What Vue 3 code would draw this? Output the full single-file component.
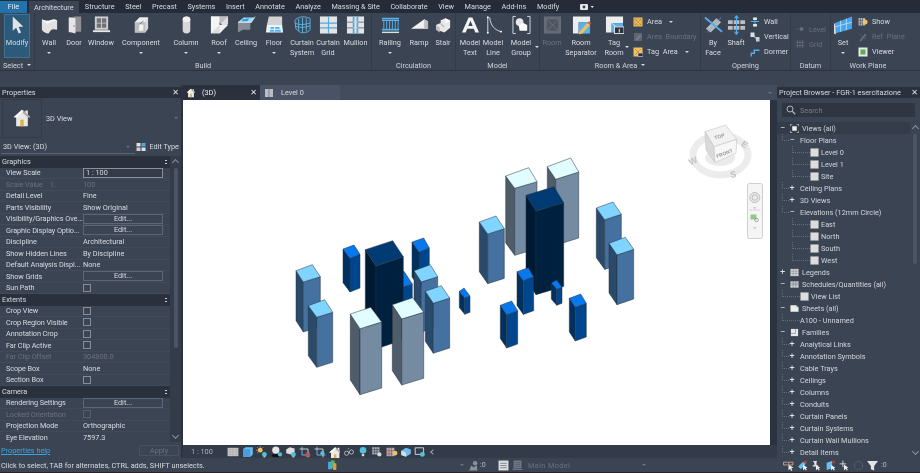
<template>
  <div class="app">
    <!-- top tab strip -->
    <div class="tabs">
      <span class="tab file">File</span>
      <span class="tab active">Architecture</span>
      <span v-for="t in tabs" :key="t" class="tab">{{ t }}</span>
      <svg class="cam" viewBox="0 0 14 8"><rect x="0" y="1" width="8" height="6" rx="1" fill="#e4e6ea"/><circle cx="4" cy="4" r="1.4" fill="#39404d"/><path d="M10.500 3h3.500l-1.750 2z" fill="#d8dbe0"/></svg>
    </div>

    <!-- ribbon -->
    <div class="ribbon">
      <div v-for="p in panels" :key="p.label" class="panel" :style="{ width: p.w + 'px' }">
        <div class="panel-tools">
          <template v-for="t in p.items" :key="t.label || t.rows[0].label">
            <div v-if="t.rows" class="stack" :class="{ pair: t.rows.length === 2 }" :style="{ width: t.w + 'px' }">
              <div v-for="r in t.rows" :key="r.label" class="stack-row" :class="{ off: r.off }">
                <svg class="ico-s" viewBox="0 0 20 20" v-html="icons[r.icon]"></svg>
                <span>{{ r.label }}</span>
                <i v-if="r.caret" class="caret"></i>
              </div>
            </div>
            <div v-else class="tool" :class="{ on: t.on, off: t.off }" :style="{ width: t.w + 'px' }">
              <svg class="ico" viewBox="0 0 20 20" v-html="icons[t.icon]"></svg>
              <span v-for="l in t.label.split('|')" :key="l" class="tool-line">{{ l }}</span>
              <i v-if="t.caret" class="caret under"></i>
              <i v-if="t.side" class="caret side"></i>
            </div>
          </template>
        </div>
        <div class="panel-label">{{ p.label }}<i v-if="p.caret" class="caret"></i></div>
      </div>
    </div>
    <div class="optbar"></div>

    <div class="main">
      <!-- properties palette -->
      <aside class="props">
        <div class="dock-head"><span>Properties</span><b class="x">✕</b></div>
        <div class="type-sel">
          <div class="type-thumb">
            <svg viewBox="0 0 24 24" v-html="icons.house"></svg>
          </div>
          <span class="type-name">3D View</span>
          <i class="caret dim"></i>
        </div>
        <div class="inst-row">
          <span>3D View: (3D)</span>
          <i class="caret dim"></i>
          <span class="edit-type"><svg class="ico-s" viewBox="0 0 20 20" v-html="icons.editType"></svg>Edit Type</span>
        </div>
        <div class="grid-wrap">
          <div class="grid">
            <template v-for="g in propGroups" :key="g.name">
              <div class="group"><span>{{ g.name }}</span><em></em></div>
              <div v-for="r in g.rows" :key="r[0]" class="prop" :class="{ off: r[2] === 'dim' || r[2] === 'dimcheck' }">
                <span class="prop-k">{{ r[0] }}</span>
                <span class="prop-v">
                  <span v-if="r[2] === 'edit'" class="btn">Edit...</span>
                  <span v-else-if="r[2] === 'input'" class="inp">{{ r[1] }}</span>
                  <span v-else-if="r[2] === 'check' || r[2] === 'dimcheck'" class="chk"></span>
                  <template v-else>{{ r[1] }}</template>
                </span>
              </div>
            </template>
          </div>
          <div class="vscroll">
            <i class="chev up"></i>
            <div class="thumb"></div>
            <i class="chev down"></i>
          </div>
        </div>
        <div class="props-foot">
          <a>Properties help</a>
          <span class="apply">Apply</span>
        </div>
      </aside>

      <!-- centre: view tabs + canvas -->
      <section class="centre">
        <div class="view-tabs">
          <div class="vtab cur">
            <svg class="ico-s" viewBox="0 0 24 24" v-html="icons.house"></svg>
            <span>(3D)</span><b class="x">✕</b>
          </div>
          <div class="vtab lvl">
            <svg class="ico-s" viewBox="0 0 20 20" v-html="icons.planTab"></svg>
            <span>Level 0</span>
          </div>
          <i class="caret dim end"></i>
        </div>
        <div class="canvas-row">
          <div class="canvas">
            <svg class="scene" viewBox="183 100 587 345">
              <g v-for="(b, i) in boxes" :key="i" stroke="#26323e" stroke-width="0.5" stroke-linejoin="round">
                <polygon :points="b.left" :fill="b.c[1]" />
                <polygon :points="b.right" :fill="b.c[2]" />
                <polygon :points="b.top" :fill="b.c[0]" />
              </g>
              <!-- view cube -->
              <g>
                <ellipse cx="720.500" cy="155" rx="27" ry="19.500" fill="none" stroke="#ececec" stroke-width="6" />
                <ellipse cx="720.500" cy="155" rx="30.500" ry="23" fill="none" stroke="#dcdcdc" stroke-width="0.6" />
                <ellipse cx="720" cy="158" rx="15" ry="8" fill="#dedede" opacity="0.6" />
                <polygon points="705,131.700 725.700,125 736.700,139.300 714,146.700" fill="#f2f2f2" stroke="#c4c4c4" stroke-width="0.6" />
                <polygon points="705,131.700 714,146.700 715,162.700 706,150" fill="#dadada" stroke="#c4c4c4" stroke-width="0.6" />
                <polygon points="714,146.700 736.700,139.300 736,153 715,162.700" fill="#f7f7f7" stroke="#c4c4c4" stroke-width="0.6" />
                <text class="cube-t" x="720" y="138" transform="rotate(-17 720 138)">TOP</text>
                <text class="cube-t" x="725" y="155" transform="rotate(-20 725 155)">FRONT</text>
                <text class="comp" x="693" y="164" transform="rotate(-25 693 161)">W</text>
                <text class="comp" x="733" y="177.500" transform="rotate(-10 733 174)">S</text>
                <text class="comp" x="745" y="147.500" transform="rotate(35 745 144)">E</text>
              </g>
              <!-- navigation bar -->
              <g>
                <rect x="747.500" y="183.500" width="15" height="55" rx="2" fill="#f5f5f5" stroke="#cfcfcf" />
                <circle cx="754.800" cy="197.500" r="5" fill="#ececec" stroke="#bdbdbd" />
                <rect x="752.300" y="195" width="5" height="5" rx="1" fill="none" stroke="#aaa" stroke-width="0.7" />
                <path d="M753.300 207.500h3l-1.500 1.200z" fill="#999" />
                <path d="M749 210h11.500" stroke="#d4d4d4" />
                <rect x="750.500" y="214.500" width="6" height="5" fill="#8fc98a" />
                <circle cx="756.500" cy="220" r="1.800" fill="none" stroke="#888" stroke-width="0.7" />
                <path d="M753.300 227.500h3l-1.500 1.200z" fill="#999" />
              </g>
            </svg>
          </div>
          <div class="canvas-side"></div>
        </div>
        <div class="viewbar">
          <span class="scale">1 : 100</span>
          <svg v-for="(v, i) in viewIcons" :key="i" class="ico-v" viewBox="0 0 20 20" v-html="icons[v]"></svg>
          <i class="chev-left"></i>
        </div>
      </section>

      <!-- project browser -->
      <aside class="browser">
        <div class="dock-head"><span>Project Browser - FGR-1 esercitazione</span><b class="x">✕</b></div>
        <div class="search">
          <svg class="ico-s" viewBox="0 0 20 20"><circle cx="8" cy="8" r="6" fill="none" stroke="#aeb4bd" stroke-width="2"/><path d="M12.500 12.500l6 6" stroke="#aeb4bd" stroke-width="2.400"/></svg>
          <span>Search</span>
        </div>
        <div class="tree-wrap">
          <div class="tree">
            <div v-for="n in tree" :key="n.t" class="node" :class="['l' + n.l, { sel: n.sel }]">
              <span v-if="n.s" class="sign">{{ n.s }}</span>
              <svg v-if="n.i" class="ico-t" viewBox="0 0 20 20" v-html="icons[n.i]"></svg>
              <span class="node-t">{{ n.t }}</span>
            </div>
          </div>
          <div class="vscroll wide">
            <i class="chev up"></i>
            <div class="thumb"></div>
            <i class="chev down"></i>
          </div>
        </div>
      </aside>
    </div>

    <!-- status bar -->
    <div class="status">
      <span class="st-text">Click to select, TAB for alternates, CTRL adds, SHIFT unselects.</span>
      <svg class="ico-st" viewBox="0 0 20 20" v-html="icons.worksets"></svg>
      <i class="caret dim st-c1"></i>
      <svg class="ico-st st-person" viewBox="0 0 20 20" v-html="icons.person"></svg>
      <span class="st-zero">:0</span>
      <svg class="ico-st st-list" viewBox="0 0 20 20" v-html="icons.listOn"></svg>
      <svg class="ico-st st-list2" viewBox="0 0 20 20" v-html="icons.listOff"></svg>
      <span class="st-model">Main Model</span>
      <i class="caret dim"></i>
      <div class="st-right">
        <svg v-for="(s, i) in statusIcons" :key="i" class="ico-st" viewBox="0 0 20 20" v-html="icons[s]"></svg>
        <span class="st-zero last">:0</span>
      </div>
    </div>
  </div>
</template>

<script setup>
const tabs = ['Structure', 'Steel', 'Precast', 'Systems', 'Insert', 'Annotate', 'Analyze', 'Massing & Site', 'Collaborate', 'View', 'Manage', 'Add-Ins', 'Modify']

const panels = [
  { label: 'Select', caret: true, w: 35, items: [{ label: 'Modify', icon: 'modify', w: 26, on: true }] },
  {
    label: 'Build', w: 337, items: [
      { label: 'Wall', icon: 'wall', w: 28, caret: true },
      { label: 'Door', icon: 'door', w: 22 },
      { label: 'Window', icon: 'window', w: 32 },
      { label: 'Component', icon: 'component', w: 48, caret: true },
      { label: 'Column', icon: 'column', w: 42, caret: true },
      { label: 'Roof', icon: 'roof', w: 24, caret: true },
      { label: 'Ceiling', icon: 'ceiling', w: 30 },
      { label: 'Floor', icon: 'floor', w: 26, caret: true },
      { label: 'Curtain|System', icon: 'curtainSys', w: 30 },
      { label: 'Curtain|Grid', icon: 'curtainGrid', w: 22 },
      { label: 'Mullion', icon: 'mullion', w: 33 }
    ]
  },
  {
    label: 'Circulation', w: 84, items: [
      { label: 'Railing', icon: 'railing', w: 36, caret: true },
      { label: 'Ramp', icon: 'ramp', w: 22 },
      { label: 'Stair', icon: 'stair', w: 26 }
    ]
  },
  {
    label: 'Model', w: 84, items: [
      { label: 'Model|Text', icon: 'modelText', w: 28 },
      { label: 'Model|Line', icon: 'modelLine', w: 18 },
      { label: 'Model|Group', icon: 'modelGroup', w: 38, side: true }
    ]
  },
  {
    label: 'Room & Area', caret: true, w: 161, items: [
      { label: 'Room', icon: 'room', w: 24, off: true },
      { label: 'Room|Separator', icon: 'roomSep', w: 34 },
      { label: 'Tag|Room', icon: 'tagRoom', w: 32, side: true },
      { w: 71, rows: [
        { label: 'Area', icon: 'area', caret: true },
        { label: 'Area  Boundary', icon: 'areaB', off: true },
        { label: 'Tag  Area', icon: 'tagArea', caret: true }
      ] }
    ]
  },
  {
    label: 'Opening', w: 90, items: [
      { label: 'By|Face', icon: 'byFace', w: 24 },
      { label: 'Shaft', icon: 'shaft', w: 22 },
      { w: 44, rows: [
        { label: 'Wall', icon: 'opWall' },
        { label: 'Vertical', icon: 'opVert' },
        { label: 'Dormer', icon: 'dormer' }
      ] }
    ]
  },
  {
    label: 'Datum', w: 40, items: [
      { w: 40, rows: [
        { label: 'Level', icon: 'level', off: true },
        { label: 'Grid', icon: 'gridI', off: true }
      ] }
    ]
  },
  {
    label: 'Work Plane', w: 74, items: [
      { label: 'Set', icon: 'setWp', w: 24, caret: true },
      { w: 50, rows: [
        { label: 'Show', icon: 'show' },
        { label: 'Ref  Plane', icon: 'refPlane', off: true },
        { label: 'Viewer', icon: 'viewer' }
      ] }
    ]
  }
]

const propGroups = [
  {
    name: 'Graphics',
    rows: [
      ['View Scale', '1 : 100', 'input'],
      ['Scale Value    1:', '100', 'dim'],
      ['Detail Level', 'Fine'],
      ['Parts Visibility', 'Show Original'],
      ['Visibility/Graphics Ove...', '', 'edit'],
      ['Graphic Display Optio...', '', 'edit'],
      ['Discipline', 'Architectural'],
      ['Show Hidden Lines', 'By Discipline'],
      ['Default Analysis Displ...', 'None'],
      ['Show Grids', '', 'edit'],
      ['Sun Path', '', 'check']
    ]
  },
  {
    name: 'Extents',
    rows: [
      ['Crop View', '', 'check'],
      ['Crop Region Visible', '', 'check'],
      ['Annotation Crop', '', 'check'],
      ['Far Clip Active', '', 'check'],
      ['Far Clip Offset', '304800.0', 'dim'],
      ['Scope Box', 'None'],
      ['Section Box', '', 'check']
    ]
  },
  {
    name: 'Camera',
    rows: [
      ['Rendering Settings', '', 'edit'],
      ['Locked Orientation', '', 'dimcheck'],
      ['Projection Mode', 'Orthographic'],
      ['Eye Elevation', '7597.3']
    ]
  }
]

const tree = [
  { t: 'Views (all)', l: 0, s: '−', i: 'views', sel: true },
  { t: 'Floor Plans', l: 1, s: '−' },
  { t: 'Level 0', l: 2, i: 'sheetView' },
  { t: 'Level 1', l: 2, i: 'sheetView' },
  { t: 'Site', l: 2, i: 'sheetView' },
  { t: 'Ceiling Plans', l: 1, s: '+' },
  { t: '3D Views', l: 1, s: '+' },
  { t: 'Elevations (12mm Circle)', l: 1, s: '−' },
  { t: 'East', l: 2, i: 'sheetView' },
  { t: 'North', l: 2, i: 'sheetView' },
  { t: 'South', l: 2, i: 'sheetView' },
  { t: 'West', l: 2, i: 'sheetView' },
  { t: 'Legends', l: 0, s: '+', i: 'legend' },
  { t: 'Schedules/Quantities (all)', l: 0, s: '−', i: 'schedule' },
  { t: 'View List', l: 3, i: 'sheetView' },
  { t: 'Sheets (all)', l: 0, s: '−', i: 'sheet' },
  { t: 'A100 - Unnamed', l: 4 },
  { t: 'Families', l: 0, s: '−', i: 'families' },
  ...['Analytical Links', 'Annotation Symbols', 'Cable Trays', 'Ceilings', 'Columns', 'Conduits', 'Curtain Panels', 'Curtain Systems', 'Curtain Wall Mullions', 'Detail Items']
    .map((t) => ({ t, l: 1, s: '+' }))
]

// top, left side, right side
const palette = {
  pale: ['#e2fdff', '#4e5d69', '#758ba1'],
  sky: ['#7fd5ff', '#2a4a6c', '#44719f'],
  blue: ['#0878ee', '#00305f', '#00468d'],
  navy: ['#003b74', '#001a33', '#002040']
}

// kind, top face corners (left, back, right, front) in page pixels, height
const blocks = [
  ['pale', 505.7, 176, 528.7, 167.7, 537, 181.7, 514.7, 188.3, 67],
  ['pale', 547.3, 166.7, 570.7, 158, 578.7, 172, 555.7, 179.3, 66],
  ['navy', 526, 195.3, 554, 186.7, 563.7, 202.7, 536, 211, 83.7],
  ['sky', 479.3, 222, 496, 216, 504.3, 228.7, 487.7, 234, 49.7],
  ['sky', 596.3, 208, 613, 202, 621.3, 214.3, 604.7, 219.7, 49.7],
  ['sky', 609, 243.3, 625.3, 237.3, 633.7, 249.3, 617, 255, 49.7],
  ['blue', 551.3, 283, 556.7, 280, 562, 287.3, 556.7, 289.3, 16],
  ['blue', 517, 271.7, 528.3, 267.7, 533.7, 277, 523.3, 280.7, 33.7],
  ['blue', 500.3, 305.3, 511.7, 301, 517.7, 310.7, 506.7, 314.7, 33.3],
  ['blue', 569.3, 298.3, 580.7, 294, 586.3, 303.3, 575.3, 307.3, 33.7],
  ['blue', 343, 249, 354, 245, 360, 254.3, 350, 258.3, 33.7],
  ['blue', 385, 277, 404, 271.3, 412.3, 284, 394, 290, 33],
  ['navy', 365.3, 249.7, 392.7, 240.7, 403.3, 256.7, 376, 266, 83],
  ['blue', 412, 242, 423.7, 238, 429.3, 248, 419, 252, 35],
  ['sky', 414, 270.7, 430.3, 264.7, 437.7, 276.7, 421.3, 282, 50],
  ['sky', 296, 270.7, 312.3, 264.7, 320.3, 276.7, 303.3, 282, 50],
  ['sky', 308.3, 305.7, 324.7, 299.7, 332.7, 312.3, 316.7, 317.3, 50],
  ['sky', 425.3, 291.3, 441.3, 285.7, 449.7, 298, 433.3, 303.3, 50],
  ['pale', 350.3, 314, 370.7, 307.3, 381.7, 322, 360, 328.7, 66],
  ['pale', 392.3, 304.7, 412.7, 297.7, 423.7, 312.3, 401.7, 319, 66],
  ['blue', 459.3, 291.3, 464, 288, 470, 296, 464.7, 298, 16.3]
]

const boxes = blocks.map(([k, lx, ly, bx, by, rx, ry, fx, fy, h]) => ({
  c: palette[k],
  top: `${lx},${ly} ${bx},${by} ${rx},${ry} ${fx},${fy}`,
  left: `${lx},${ly} ${fx},${fy} ${fx},${fy + h} ${lx},${ly + h}`,
  right: `${fx},${fy} ${rx},${ry} ${rx},${ry + h} ${fx},${fy + h}`
}))

const viewIcons = ['vDetail', 'vStyle', 'vSun', 'vShadow', 'vRender', 'vCrop', 'vCrop2', 'house', 'vGlasses', 'vBulb', 'vHide', 'vTemp', 'vReveal', 'vBox']
const statusIcons = ['sLink', 'sUnderlay', 'sPin', 'sFace', 'sDrag', 'sRing', 'sFilter']

const cy = '#4fc3d9'
const icons = {
  modify: '<path d="M5 1v15l3.600-3 2.600 6 2.600-1.200-2.600-5.800 4.800-.5z" fill="#dfe4ea"/>',
  wall: '<path d="M2 4c4 2 7 2 9 1s5-1 7 0v10c-3-1-5-1-7 1l-2 3c-3 0-6-2-7-4z" fill="#e2e2e2"/><path d="M2 4c4 2 7 2 9 1s5-1 7 0c-2 1-5 1-7 2s-4 2-5 1-3-2-4-4z" fill="#f6f6f6"/>',
  door: '<path d="M4 2l7-1h6v16h-6l-7 1z" fill="#8e9094"/><path d="M4 2l7 1v16l-7-2z" fill="#e6e6e6"/><circle cx="9.500" cy="11" r=".7" fill="#666"/>',
  window: '<rect x="3" y="1" width="14" height="14" fill="#cfcfcf"/><path d="M5 3h4.500v4.500H5zM10.500 3H15v4.500h-4.500zM5 8.500h4.500V13H5zM10.500 8.500H15V13h-4.500z" fill="#6e7176"/><rect x="1" y="15.500" width="18" height="2" fill="#e8e8e8"/>',
  component: '<path d="M3 7l5-5h9v12l-3 4H3z" fill="#d6d6d6"/><path d="M3 7h11v11H3z" fill="#bdbdbd"/><path d="M8 2h9l-3 5H3z" fill="#ededed"/><path d="M8 9l4 1v6H7z" fill="#f2f2f2"/><path d="M8 9l4-3" stroke="#777" fill="none"/>',
  column: '<rect x="6" y="1" width="8" height="18" rx="4" fill="#d8d8d8"/><ellipse cx="10" cy="4" rx="4" ry="3" fill="#f0f0f0"/>',
  roof: '<path d="M1 1h18v8l-9 10H1z" fill="#dedede"/><path d="M1 1h9v9l-9 9z" fill="#f5f5f5"/><path d="M10 1h9l-9 9z" fill="#bdbdbd"/><path d="M10 10h9l-9 9z" fill="#f0f0f0"/><path d="M10 7l3 3h-3z" fill="#6b6f76"/>',
  ceiling: '<path d="M1 7l6-5h12l-4 6H2z" fill="#9fdcf5"/><path d="M6 4l7-1-2 3H5z" fill="#2f9be0"/><path d="M1 7v11l5-3h8V8z" fill="#c9c9c9" opacity=".55"/><path d="M1 7h14l4-6" fill="none" stroke="#ddd" stroke-width=".8"/>',
  floor: '<path d="M4 1h14v9H2z" fill="#d2d2d2"/><path d="M2 10h16l1 8H1z" fill="#eaf6fb"/><path d="M6 12h9l2 5H5z" fill="#4fb2ee"/><path d="M10 12v5M5 14.500h11" stroke="#eaf6fb"/>',
  curtainSys: '<path d="M2 5c5-5 11-4 16-2v12c-3 4-7 3-10 3L3 14z" fill="#3a4e62"/><g fill="none" stroke="#6ec3f0" stroke-width=".8"><path d="M2 5c5-5 11-4 16-2v12c-3 4-7 3-10 3L3 14zM2 8c4 2 9 2 16 0M2.400 11c4 2 9 2 15.600 0M6 3.500v13M10 2.500V18M14 3v14"/></g>',
  curtainGrid: '<rect x="1" y="1" width="18" height="18" fill="#e4e4e4"/><path d="M1 8h18M1 13h18M10 1v18" stroke="#4fa8e0" stroke-width="1.200"/>',
  mullion: '<rect x="1" y="1" width="18" height="18" fill="#e4e4e4"/><path d="M1 7h18M1 13h18" stroke="#6c7480" stroke-width="1"/><path d="M8 1v18M12 1v18" stroke="#4fa8e0" stroke-width="1.800"/><path d="M8 7h4M8 13h4" stroke="#fff"/>',
  railing: '<g stroke="#57b4ee" fill="none"><path d="M1 3h18M1 5h18" stroke-width="1.400"/><path d="M3 5v9M6 5v9M9 5v9M12 5v9M15 5v9M18 5v9" stroke-width="1"/></g><rect x="1" y="14" width="18" height="1.800" fill="#57b4ee"/><rect x="1" y="17" width="18" height="1.500" fill="#dfdfdf"/>',
  ramp: '<path d="M1 14l14-10 4 2v8z" fill="#f0f0f0"/><path d="M15 4l4 2v8h-4z" fill="#bbb"/>',
  stair: '<path d="M2 10l5-2V5l5-2 5 2v8l-6 5-8-3z" fill="#e8e8e8"/><path d="M2 10l4 3v5l-4-3zM7 8l4 3v2l-4-3z" fill="#bcbcbc"/><path d="M12 3l5 3-5 2z" fill="#fff"/>',
  modelText: '<path d="M1 18L8 2h4l7 16h-4l-1.500-4h-7L5 18zm6.700-7h4.600L10 5.500z" fill="#f4f4f4"/>',
  modelLine: '<path d="M4 1v18M6 2c1 9 5 13 12 15" fill="none" stroke="#d8dce2" stroke-width="1"/><circle cx="4" cy="2" r="1" fill="#fff"/><circle cx="4" cy="18" r="1" fill="#fff"/><circle cx="18" cy="17" r="1" fill="#fff"/>',
  modelGroup: '<path d="M4 1H1v18h3M16 1h3v18h-3" fill="none" stroke="#d8dce2"/><circle cx="8" cy="7" r="4" fill="#e8e8e8"/><path d="M7 10l5-2 4 2v6H8z" fill="#f8f8f8"/>',
  room: '<rect x="1" y="1" width="18" height="18" fill="#666c77"/><rect x="4" y="4" width="12" height="12" fill="#50565f"/><path d="M4 4l12 12M16 4L4 16" stroke="#727882" stroke-width=".8"/>',
  roomSep: '<path d="M1 1h18v6H7v12H1z" fill="#ededed"/><rect x="7" y="7" width="12" height="12" fill="#58b2ea"/><path d="M8 17l8-9 3 2-8 9-4 1z" fill="#f1c063"/><path d="M16 8l3 2 1-2-2-2z" fill="#e25b4d"/>',
  tagRoom: '<path d="M1 1h18v7H7v10H1z" fill="#ededed"/><rect x="7" y="8" width="12" height="10" fill="#58b2ea"/><path d="M7 8l12 10" stroke="#cdeafb"/><rect x="10" y="12" width="10" height="7" fill="#2d333e" stroke="#e2e2e2"/><path d="M15 14v4" stroke="#eee"/>',
  area: '<rect x="1" y="1" width="18" height="18" fill="#f1c063"/><rect x="4" y="4" width="12" height="12" fill="none" stroke="#9a6d1e" stroke-width=".8"/><path d="M4 4l12 12M16 4L4 16" stroke="#9a6d1e" stroke-width="1"/>',
  areaB: '<rect x="2" y="2" width="16" height="16" fill="#5f6570"/><path d="M5 15l9-10 3 3-9 9z" fill="#787e88"/>',
  tagArea: '<rect x="1" y="1" width="18" height="18" fill="#f1c063"/><path d="M4 4l12 12M16 4L4 16" stroke="#9a6d1e"/><rect x="10" y="12" width="10" height="7" fill="#2d333e" stroke="#e2e2e2"/>',
  byFace: '<path d="M2 14L13 3l5 4L7 18z" fill="#b9b9b9"/><path d="M1 2l18 15" stroke="#54acec" stroke-width="2"/><path d="M3 18L18 2" stroke="#54acec" stroke-width="1.400" opacity=".4"/>',
  shaft: '<g fill="#bdbdbd"><rect x="1" y="5" width="5" height="4"/><rect x="7" y="5" width="6" height="4"/><rect x="14" y="5" width="5" height="4"/><rect x="1" y="11" width="5" height="4"/><rect x="7" y="11" width="6" height="4"/><rect x="14" y="11" width="5" height="4"/></g><path d="M10 0v20M10 0L8 3M10 0l2 3M10 20l-2-3M10 20l2-3" stroke="#54acec" fill="none" stroke-width="1.200"/>',
  opWall: '<path d="M10 1v18M2 9h16" stroke="#54acec" stroke-width="2"/><rect x="6" y="1" width="8" height="5" fill="#dfdfdf"/><rect x="6" y="14" width="8" height="5" fill="#dfdfdf"/>',
  opVert: '<path d="M3 3l13 14" stroke="#54acec" stroke-width="3"/><rect x="1" y="1" width="8" height="9" fill="#dfdfdf"/><rect x="12" y="10" width="7" height="9" fill="#cfcfcf"/>',
  dormer: '<path d="M1 19V11h6V5h12v3H10v6H4v5z" fill="#54acec"/>',
  level: '<path d="M2 10h7" stroke="#666c77" stroke-dasharray="2 1" stroke-width="1.400"/><circle cx="13" cy="10" r="4" fill="#666c77"/>',
  gridI: '<path d="M5 2v16M10 2v16M15 2v16M1 7h18M1 13h18" stroke="#666c77" stroke-width="1.500"/>',
  setWp: '<path d="M1 8l18-7v13L1 19z" fill="#46a4ee"/><path d="M7 5.500V17M13 3.500V15.500M1 12l18-5" stroke="#bce2fb" stroke-width=".9"/><path d="M1 8l-1 1v10l2 1z" fill="#ddd"/>',
  show: '<rect x="1" y="2" width="13" height="15" fill="#aeb3ba"/><path d="M5 2v15M9 2v15M1 7h13M1 12h13" stroke="#3b4453"/><circle cx="14" cy="10" r="5" fill="#f1c063"/>',
  refPlane: '<path d="M3 17L14 3l3 3L6 19z" fill="#666c77"/><path d="M3 4l14 12" stroke="#666c77"/>',
  viewer: '<rect x="1" y="1" width="18" height="18" fill="#e9e9e9"/><rect x="5" y="5" width="10" height="10" fill="#55b04f"/>',
  house: '<path d="M12 2L2 11h3v11h14V11h3L19 8V3h-3v2.300z" fill="#e9e9e9"/><path d="M12 2L2 11h4l7-7z" fill="#fff"/><path d="M13 2l9 9h-3L13 6z" fill="#a9a9a9"/><rect x="10" y="14" width="4" height="8" fill="#d9b23f"/>',
  editType: '<rect x="1" y="2" width="8" height="7" fill="#e2e2e2"/><rect x="11" y="2" width="8" height="7" fill="#4fa8e0"/><rect x="1" y="11" width="8" height="7" fill="#cfcfcf"/><rect x="11" y="11" width="8" height="7" fill="#e2e2e2"/>',
  planTab: '<rect x="2" y="2" width="16" height="16" fill="#b9bec6"/><path d="M10 2v16" stroke="#4a5366"/>',
  views: '<rect x="5" y="5" width="10" height="10" fill="#f0f0f0"/><path d="M1 5V1h4M15 1h4v4M19 15v4h-4M5 19H1v-4" fill="none" stroke="#dfe2e6" stroke-width="1.400"/>',
  sheetView: '<rect x="1" y="1" width="18" height="18" fill="#dcdcdc"/><rect x="1" y="1" width="18" height="18" fill="none" stroke="#8d939c" stroke-dasharray="1.500 1.500"/>',
  legend: '<rect x="1" y="2" width="18" height="16" fill="#d4d4d4"/><path d="M7 2v16M13 2v16M1 7h18M1 12h18" stroke="#6b6f76" stroke-width=".8"/>',
  schedule: '<rect x="1" y="3" width="18" height="14" fill="#d8d8d8"/><path d="M1 7h18M1 11h18M7 3v14M13 3v14" stroke="#555b66" stroke-width="1"/>',
  sheet: '<path d="M1 3h13l5 5v9H1z" fill="#efefef"/><path d="M14 3l5 5h-5z" fill="#a6a6a6"/>',
  families: '<rect x="2" y="2" width="16" height="16" fill="#e8e8e8"/><path d="M2 12h10V2" fill="none" stroke="#555b66"/>',
  worksets: '<rect x="2" y="3" width="7" height="14" rx="1" fill="#4fa8e0"/><rect x="7" y="1" width="7" height="14" rx="1" fill="#53b36b"/><rect x="11" y="6" width="6" height="12" rx="1" fill="#d99a4a"/>',
  person: '<circle cx="13" cy="6" r="4" fill="#8b919b"/><path d="M2 19l4-9 4 3 6-3 1 9z" fill="#8b919b"/>',
  listOn: '<rect x="1" y="1" width="18" height="18" fill="#dcdfe3"/><path d="M4 6h12M4 10h12M4 14h12" stroke="#5d6676" stroke-width="1.300"/>',
  listOff: '<rect x="3" y="1" width="14" height="14" fill="#757c88"/><path d="M5 5h10M5 8.500h10M5 12h10" stroke="#3b4453"/><path d="M1 17h18" stroke="#757c88" stroke-width="2"/>',
  vDetail: '<rect x="1" y="3" width="18" height="14" fill="#c8c8c8"/><path d="M1 6h18M1 10h18M1 14h18M5 3v14M10 3v14M15 3v14" stroke="#8b8b8b" stroke-dasharray="1 1"/>',
  vStyle: '<path d="M2 5l4-3h12v12l-4 4H2z" fill="#6fbdf0"/><path d="M2 5h12v13H2z" fill="#4b9ede"/>',
  vSun: `<circle cx="7" cy="7" r="4" fill="#f1c063"/><path d="M7 0v3M0 7h3M2 2l2 2M12 2l-2 2M2 12l2-2" stroke="#f1c063"/><circle cx="14" cy="14" r="4" fill="${cy}"/><rect x="12.500" y="17" width="3" height="2" fill="#ccc"/>`,
  vShadow: `<circle cx="8" cy="7" r="6" fill="#e4e4e4"/><ellipse cx="8" cy="16" rx="7" ry="2.500" fill="#111"/><circle cx="15" cy="14" r="3.500" fill="${cy}"/>`,
  vRender: `<path d="M2 6l6-4 8 2v6l-6 4-8-2z" fill="#dcdcdc"/><circle cx="14" cy="14" r="4" fill="${cy}"/><rect x="12.500" y="17" width="3" height="2" fill="#ccc"/>`,
  vCrop: '<path d="M5 1v14h14" fill="none" stroke="#6fbdf0" stroke-width="1.500"/><path d="M1 5h14v14" fill="none" stroke="#dcdcdc" stroke-width="1.500"/><path d="M11 11l7 7M18 11l-7 7" stroke="#e0453a" stroke-width="2"/>',
  vCrop2: `<path d="M5 1v14h14" fill="none" stroke="#6fbdf0" stroke-width="1.500"/><path d="M1 5h14v14" fill="none" stroke="#dcdcdc" stroke-width="1.500"/><circle cx="14" cy="12" r="3.500" fill="${cy}"/>`,
  vGlasses: '<circle cx="6" cy="12" r="3.500" fill="none" stroke="#b9bec6" stroke-width="1.500"/><circle cx="14" cy="10" r="3.500" fill="none" stroke="#b9bec6" stroke-width="1.500"/><path d="M9 11l2-1M8 6l2-3" stroke="#b9bec6"/>',
  vBulb: `<circle cx="10" cy="7" r="5.500" fill="${cy}"/><rect x="8" y="13" width="4" height="4" fill="#d8d8d8"/>`,
  vHide: `<rect x="2" y="2" width="12" height="12" fill="#aeb3ba"/><path d="M6 2v12M10 2v12M2 6h12M2 10h12" stroke="#333b48"/><circle cx="14" cy="14" r="3.500" fill="#d8d8d8"/>`,
  vTemp: `<rect x="1" y="3" width="13" height="14" fill="#aeb3ba"/><path d="M5 3v14M9 3v14M1 8h13M1 13h13" stroke="#b73a30"/><circle cx="15" cy="12" r="4" fill="#f1c063"/>`,
  vReveal: '<path d="M2 8l8-5 8 3v7l-8 5-8-3z" fill="#6fbdf0"/><path d="M2 8l8 3v7l-8-3z" fill="#dcdcdc"/>',
  vBox: `<path d="M2 3h14v11H2z" fill="none" stroke="#dcdcdc" stroke-width="1.500"/><circle cx="14" cy="14" r="4" fill="${cy}"/>`,
  sLink: '<path d="M1 4h7a2 2 0 010 5H1zM10 4h8v5h-7" fill="none" stroke="#f1c0a0" stroke-width="1.300"/><path d="M10 8v11l3-3 2 4 2-1-2-4 4-1z" fill="#eee"/>',
  sUnderlay: '<path d="M2 12L11 3l5 4-9 10z" fill="#6fbdf0"/><path d="M11 8v11l3-3 2 3 2-1-2-3 3-1z" fill="#eee"/><path d="M13 1l5 5M18 1l-5 5" stroke="#e0453a" stroke-width="1.800"/>',
  sPin: '<path d="M3 2h8l-1 3v4l3 1v2H3v-2l3-1V5z" fill="#dfdfdf"/><path d="M9 9v10l3-3 2 3 2-1-2-3 3-1z" fill="#eee"/>',
  sFace: '<path d="M3 5l10-3v13L3 18z" fill="#6fbdf0"/><path d="M11 9v10l3-3 2 3 2-1-2-3 3-1z" fill="#eee"/><path d="M13 1l5 5M18 1l-5 5" stroke="#e0453a" stroke-width="1.800"/>',
  sDrag: '<path d="M7 1v12M1 7h12" stroke="#e4e4e4" stroke-width="1.500"/><path d="M9 8v11l3-3 2 3 2-1-2-3 3-1z" fill="#eee"/>',
  sRing: '<circle cx="10" cy="10" r="7.500" fill="none" stroke="#767c87" stroke-width="1.200" stroke-dasharray="2.500 1.500"/>',
  sFilter: '<path d="M0 2h20l-7 9v8l-6-2v-6z" fill="#e2e4e8"/>'
}
</script>

<style>
html, body { margin: 0; background: #3b4453; }
</style>

<style scoped>
.app {
  width: 920px;
  height: 473px;
  overflow: hidden;
  display: flex;
  flex-direction: column;
  background: #3b4453;
  color: #d7dbe1;
  font-family: Roboto, "Liberation Sans", sans-serif;
  font-size: 7.300px;
  filter: blur(0.35px);
}
svg { display: block; flex: none; }

.tabs {
  height: 13px;
  flex: none;
  display: flex;
  align-items: stretch;
  background: #252c38;
  padding-left: 0;
}
.tab {
  padding: 0 5.300px;
  line-height: 14px;
  white-space: nowrap;
}
.tab.file {
  width: 27px;
  box-sizing: border-box;
  text-align: center;
  padding: 0;
  margin: 1px 2px 0 0;
  background: #2273aa;
  color: #e8eef3;
  line-height: 12px;
}
.tab.active {
  background: #3b4453;
  margin-top: 1px;
  line-height: 13px;
  padding: 0 5px;
  margin-right: 1px;
}
.cam { width: 14px; height: 8px; align-self: center; margin-left: 15px; }

.ribbon {
  height: 57px;
  flex: none;
  display: flex;
  border-bottom: 1px solid #2c3340;
  box-sizing: content-box;
}
.panel {
  flex: none;
  display: flex;
  flex-direction: column;
  box-sizing: border-box;
  border-right: 1px solid #333b49;
}
.panel:last-child { border-right: 0; }
.panel-tools { height: 46px; display: flex; flex: none; }
.panel-label {
  flex: 1;
  display: flex;
  align-items: center;
  justify-content: center;
  gap: 4px;
  color: #cfd3da;
  padding-top: 1px;
}
.tool {
  position: relative;
  flex: none;
  display: flex;
  flex-direction: column;
  align-items: center;
  padding-top: 2px;
  box-sizing: border-box;
  white-space: nowrap;
}
.tool .ico { width: 19px; height: 20px; margin-bottom: 3px; }
.tool-line { line-height: 9.500px; display: block; }
.tool.on {
  margin: 1px 0 0 4px;
  padding-top: 1px;
  background: #2d5a78;
  box-shadow: inset 0 0 0 1px #3c7396;
  height: 44px;
}
.tool.off { color: #6a717e; }
.caret {
  display: inline-block;
  width: 0;
  height: 0;
  border-left: 2px solid transparent;
  border-right: 2px solid transparent;
  border-top: 2.500px solid #d7dbe1;
  flex: none;
}
.caret.under { margin-top: 4px; }
.caret.side { position: absolute; right: 1px; top: 33px; }
.caret.dim { border-top-color: #6d7481; }

.stack {
  flex: none;
  display: flex;
  flex-direction: column;
  padding-top: 1.500px;
  padding-left: 3px;
  box-sizing: border-box;
  white-space: pre;
}
.stack.pair { padding-top: 8.500px; padding-left: 4px; }
.stack-row { height: 15px; display: flex; align-items: center; gap: 4px; }
.stack-row.off { color: #6a717e; }
.ico-s { width: 10px; height: 10px; }
.stack-row .caret { margin-left: 3px; }

.optbar { height: 14px; flex: none; background: #3b4453; }

.main { flex: 1; display: flex; min-height: 0; }

.dock-head {
  height: 11px;
  margin-top: 2px;
  background: #2a313c;
  display: flex;
  align-items: center;
  justify-content: space-between;
  padding: 0 2px;
  white-space: nowrap;
}
.x { font-weight: 400; font-size: 8px; color: #e4e6ea; font-family: "DejaVu Sans", sans-serif; }

.props {
  width: 181px;
  flex: none;
  display: flex;
  flex-direction: column;
}
.type-sel {
  height: 40px;
  display: flex;
  align-items: center;
  position: relative;
}
.type-thumb {
  width: 40px;
  height: 39px;
  margin-left: 2px;
  box-sizing: border-box;
  border: 1px solid #333b49;
  display: flex;
  align-items: center;
  justify-content: center;
  flex: none;
}
.type-thumb svg { width: 20px; height: 20px; }
.type-name { margin-left: 4px; flex: 1; }
.type-sel .caret { margin-right: 3px; }
.inst-row {
  height: 18px;
  display: flex;
  align-items: center;
  padding: 0 2px 1px 3px;
  position: relative;
  box-sizing: border-box;
  white-space: nowrap;
}
.inst-row > span:first-child { width: 127px; }
.edit-type { display: flex; align-items: center; gap: 3px; margin-left: 6px; }
.inst-row::after {
  content: "";
  position: absolute;
  left: 1px;
  width: 134px;
  bottom: 2px;
  border-bottom: 1px solid #5b6474;
}
.grid-wrap { flex: none; height: 286px; display: flex; overflow: hidden; }
.grid { width: 170px; flex: none; }
.group {
  height: 11.500px;
  background: #2a313c;
  display: flex;
  align-items: center;
  justify-content: space-between;
  padding: 0 3px 0 2px;
}
.group em { width: 2px; height: 4px; border-top: 1px solid #cfd3da; border-bottom: 1px solid #cfd3da; box-sizing: border-box; }
.prop {
  height: 11.500px;
  display: flex;
  align-items: center;
  box-sizing: border-box;
  border-bottom: 1px solid #414a59;
  white-space: pre;
}
.prop-k { width: 83px; padding-left: 6px; box-sizing: border-box; flex: none; letter-spacing: -0.08px; }
.prop-v { flex: 1; display: flex; align-items: center; height: 100%; }
.prop.off { color: #6a717e; }
.btn, .inp {
  width: 80px;
  height: 10px;
  box-sizing: border-box;
  border: 1px solid #5d6676;
  display: flex;
  align-items: center;
  justify-content: center;
  line-height: 8px;
}
.inp { justify-content: flex-start; padding-left: 2px; border-color: #8b919b; background: #333b48; }
.chk { width: 6px; height: 6px; border: 1px solid #868d99; display: block; }
.prop.off .chk { border-color: #565e6c; }
.vscroll {
  flex: 1;
  position: relative;
  display: flex;
  flex-direction: column;
  align-items: center;
  background: #343c4a;
}
.vscroll .thumb { width: 4px; height: 180px; margin-top: 3px; background: #4c5565; border-radius: 2px; }
.chev { width: 4px; height: 4px; border-left: 1px solid #8a919c; border-top: 1px solid #8a919c; display: block; flex: none; }
.chev.up { transform: rotate(45deg); margin-top: 4px; }
.chev.down { transform: rotate(225deg); margin-top: auto; margin-bottom: 4px; }
.props-foot {
  flex: 1;
  display: flex;
  align-items: center;
  justify-content: space-between;
  padding: 0 2px 0 1px;
}
.props-foot a { color: #37a6e0; text-decoration: underline; }
.apply {
  width: 40px;
  height: 11px;
  box-sizing: border-box;
  border: 1px solid #4a5261;
  border-radius: 1px;
  color: #6a717e;
  text-align: center;
  line-height: 9px;
}

.centre {
  width: 596px;
  flex: none;
  display: flex;
  flex-direction: column;
  padding-left: 2px;
  box-sizing: border-box;
  background: #2b3240;
}
.view-tabs {
  height: 15px;
  flex: none;
  display: flex;
  align-items: stretch;
  background: #434c5d;
  position: relative;
}
.vtab {
  display: flex;
  align-items: center;
  box-sizing: border-box;
  padding: 0 3px;
  gap: 6px;
}
.vtab.cur { width: 77px; background: #2a313c; color: #eceef1; }
.vtab.cur .x { margin-left: auto; }
.vtab.lvl { width: 80px; padding-left: 4px; background: #4a5366; }
.vtab.lvl .ico-s { margin-right: 1px; }
.end { position: absolute; right: 5px; top: 7px; }
.canvas-row { height: 345px; flex: none; display: flex; }
.canvas { width: 587px; flex: none; background: #fff; position: relative; }
.scene { width: 587px; height: 345px; }
.cube-t { font-size: 5px; fill: #9b9b9b; text-anchor: middle; font-family: "Liberation Sans", sans-serif; font-weight: 700; }
.comp { font-size: 9px; fill: #c2c2c2; text-anchor: middle; font-family: "Liberation Sans", sans-serif; font-weight: 700; }
.canvas-side { flex: 1; background: #2b3240; }
.viewbar {
  flex: 1;
  display: flex;
  align-items: center;
  gap: 2.400px;
  background: #333b48;
  position: relative;
}
.scale { width: 42px; padding-left: 8px; color: #aeb3bb; box-sizing: border-box; flex: none; }
.ico-v { width: 12px; height: 12px; }
.chev-left { width: 3px; height: 3px; border-left: 1px solid #9aa0aa; border-bottom: 1px solid #9aa0aa; transform: rotate(45deg); margin-left: 2px; }

.browser {
  flex: 1;
  display: flex;
  flex-direction: column;
  min-width: 0;
}
.search {
  margin: 5px 5px 5px 5px;
  height: 14px;
  background: #2f3642;
  display: flex;
  align-items: center;
  gap: 4px;
  padding-left: 4px;
  color: #767d89;
}
.tree-wrap { flex: 1; display: flex; min-height: 0; overflow: hidden; }
.tree { width: 133px; flex: none; }
.node {
  height: 12px;
  display: flex;
  align-items: center;
  position: relative;
  white-space: nowrap;
  color: #d2d6dc;
}
.node.sel { background: #343b49; }
.sign { position: absolute; width: 8px; text-align: center; font-size: 9px; line-height: 12px; color: #dfe2e6; }
.l0 .sign { left: 1.500px; }
.l1 .sign { left: 11px; }
.l0 .ico-t { margin-left: 13px; margin-right: 3px; }
.l1 .node-t { margin-left: 23px; }
.l2 .ico-t { margin-left: 33px; margin-right: 2px; }
.l3 .ico-t { margin-left: 23px; margin-right: 2px; }
.l4 .node-t { margin-left: 23px; }
.ico-t { width: 9px; height: 9px; }
.l1::before, .l2::before, .l3::before, .l4::before {
  content: "";
  position: absolute;
  top: 0;
  height: 6px;
  border-bottom: 1px dotted #626b7a;
  border-left: 1px dotted #626b7a;
}
.l1::before { left: 5px; width: 6px; }
.l3::before, .l4::before { left: 5px; width: 17px; }
.l2::before { left: 15px; width: 17px; }
.vscroll.wide { background: #3b4453; }
.vscroll.wide .thumb { height: 130px; }

.status {
  height: 15px;
  flex: none;
  display: flex;
  align-items: center;
  position: relative;
  white-space: nowrap;
  border-bottom: 1px solid #2a2026;
  box-sizing: border-box;
}
.st-text { width: 327px; padding-left: 1px; box-sizing: border-box; flex: none; }
.ico-st { width: 11px; height: 11px; }
.st-c1 { margin-left: 122px; }
.st-person { margin-left: 4px; }
.st-zero { color: #b9bdc4; margin-left: 1px; font-size: 7px; width: 5px; }
.st-zero.last { margin-left: 0; }
.st-list { margin-left: 13px; }
.st-list2 { margin-left: 3px; }
.st-model { margin-left: 5px; width: 114px; color: #6a717e; letter-spacing: 0.4px; flex: none; }
.st-right { margin-left: auto; display: flex; gap: 3px; align-items: center; padding-right: 34px; }
</style>
